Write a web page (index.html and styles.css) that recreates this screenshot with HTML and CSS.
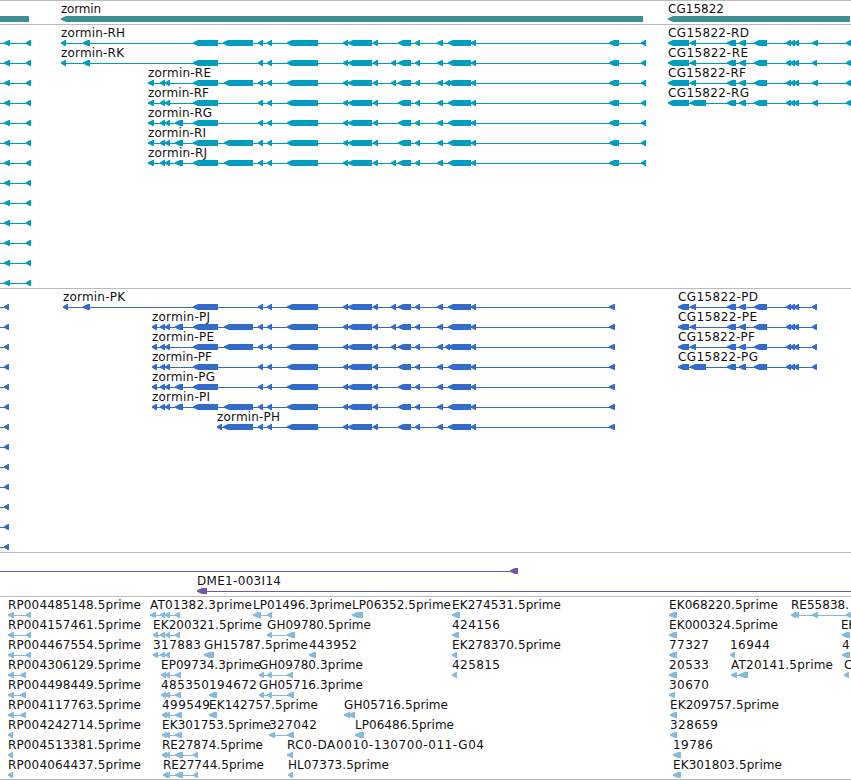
FILE: index.html
```html
<!DOCTYPE html>
<html>

<head>
    <meta charset="utf-8">
    <title>zormin - Genome Browser</title>
    <link rel="stylesheet" href="styles.css">
</head>

<body>
    <div class="browser">
        <div class="track genes" id="genes"></div>
        <div class="track transcripts" id="transcripts"></div>
        <div class="track proteins" id="proteins"></div>
        <div class="track clones" id="clones"></div>
        <div class="track ests" id="ests"></div>
    </div>
    <script src="tracks.js"></script>
</body>

</html>
```

FILE: styles.css
```css
body {
    margin: 0;
    background-color: #fff;
    overflow: hidden;
}

.browser {
    display: flex;
    flex-direction: column;
    width: 851px;
    height: 780px;
    overflow: hidden;
}

.track {
    box-sizing: border-box;
    border-top: 1px solid #bbb;
    padding-bottom: 3px;
    flex-shrink: 0;
}

.row {
    display: block;
    width: 851px;
    height: 20px;
    overflow: visible;
}

.intron {
    shape-rendering: crispEdges;
}

.label {
    font-family: "DejaVu Sans", sans-serif;
    font-size: 12px;
    fill: #111;
}

.genes {
    fill: #3d8e95;
}

.transcripts {
    fill: #009dbf;
}

.proteins {
    fill: #316bcb;
}

.clones {
    fill: #7357a5;
}

.ests {
    fill: #85badc;
    border-bottom: 1px solid #bbb;
    padding-bottom: 2px;
}
```

FILE: tracks.js
```js
const SVG = "http://www.w3.org/2000/svg";

// exons shared by all zormin isoforms
const middle = [[258, 263], [267, 272], [287, 318], [343, 348], [348, 372], [373, 378]];
const middle2 = [[398, 411], [415, 420], [437, 443]];
const tail = [[448, 471], [471, 476]];
const extra = [[391, 396]];
const start = [[160, 165], [165, 170]];
const start2 = [[175, 183]];
const big = [[193, 218]];
const big2 = [[224, 253]];
const endR = [[609, 619], [641, 646]];
const endP = [[609, 615]];

// exons shared by all CG15822 isoforms
const cg = [[727, 736], [739, 746], [754, 767], [786, 791], [790, 795], [794, 799]];

const leftR = ["", 0, 0, [[-20, -10], [4, 10], [26, 31]]];
const leftP = ["", 0, 0, [[-20, -10], [4, 9]]];

// feature = [label, x, label width, exons]
const genes = [
    [["", 0, 0, [[-40, 29]]], ["zormin", 61, 40, [[61, 643]]], ["CG15822", 668, 56, [[668, 850]]]]
];

const transcripts = [
    [leftR,
        ["zormin-RH", 61, 64, [[61, 66], [83, 90], ...big, [223, 253], ...middle, ...middle2, ...tail, ...endR]],
        ["CG15822-RD", 668, 81, [[668, 689], [690, 696], ...cg, [812, 818], [846, 851]]]],
    [leftR,
        ["zormin-RK", 61, 63, [[61, 66], [83, 90], ...big, ...middle, ...extra, ...middle2, ...tail, ...endR]],
        ["CG15822-RE", 668, 80, [[668, 689], [690, 696], ...cg, [812, 817], [846, 851]]]],
    [leftR,
        ["zormin-RE", 148, 63, [[148, 154], ...start, ...big, ...big2, ...middle, ...extra, ...middle2, [445, 450], ...tail, ...endR]],
        ["CG15822-RF", 668, 78, [[668, 689], [690, 696], ...cg, [812, 818], [846, 851]]]],
    [leftR,
        ["zormin-RF", 148, 61, [[148, 154], ...start, ...big, ...middle, ...middle2, ...tail, ...endR]],
        ["CG15822-RG", 668, 81, [[668, 689], [690, 706], ...cg, [812, 818], [846, 851]]]],
    [leftR, ["zormin-RG", 148, 64, [[148, 154], ...start, ...start2, ...big, ...middle, ...middle2, ...tail, ...endR]]],
    [leftR, ["zormin-RI", 148, 58, [[148, 154], ...start, ...start2, ...big, ...big2, ...middle, ...middle2, ...tail, ...endR]]],
    [leftR, ["zormin-RJ", 148, 59, [[148, 154], ...start, ...start2, ...big, ...big2, ...middle, ...extra, ...middle2, ...tail, ...endR]]],
    [leftR], [leftR], [leftR], [leftR], [leftR], [leftR]
];

const proteins = [
    [leftP,
        ["zormin-PK", 63, 62, [[63, 68], [83, 90], ...big, ...middle, ...extra, ...middle2, ...tail, ...endP]],
        ["CG15822-PD", 678, 80, [[678, 689], [690, 696], ...cg, [812, 817]]]],
    [leftP,
        ["zormin-PJ", 152, 58, [[152, 157], ...start, ...start2, ...big, ...big2, ...middle, ...extra, ...middle2, ...tail, ...endP]],
        ["CG15822-PE", 678, 79, [[678, 689], [690, 696], ...cg, [812, 817]]]],
    [leftP,
        ["zormin-PE", 152, 62, [[152, 157], ...start, ...big, ...big2, ...middle, ...extra, ...middle2, [445, 450], ...tail, ...endP]],
        ["CG15822-PF", 678, 77, [[678, 689], [690, 696], ...cg, [812, 817]]]],
    [leftP,
        ["zormin-PF", 152, 60, [[152, 157], ...start, ...big, ...middle, ...middle2, ...tail, ...endP]],
        ["CG15822-PG", 678, 80, [[678, 689], [690, 706], ...cg, [812, 817]]]],
    [leftP, ["zormin-PG", 152, 63, [[152, 157], ...start, ...start2, ...big, ...middle, ...middle2, ...tail, ...endP]]],
    [leftP, ["zormin-PI", 152, 58, [[152, 157], ...start, ...start2, ...big, ...big2, ...middle, ...middle2, ...tail, ...endP]]],
    [leftP, ["zormin-PH", 217, 63, [[217, 222], [223, 253], ...middle, ...middle2, ...tail, ...endP]]],
    [leftP], [leftP], [leftP], [leftP], [leftP], [leftP]
];

const clones = [
    [["", 0, 0, [[-20, -10], [510, 518]]]],
    [["DME1-003I14", 197, 84, [[197, 207], [900, 910]]]]
];

const ests = [
    [["RP004485148.5prime", 8, 133, [[8, 14], [26, 31]]],
        ["AT01382.3prime", 150, 102, [[150, 156], ...start, [175, 180]]],
        ["LP01496.3prime", 253, 99, [[253, 261], [267, 272]]],
        ["LP06352.5prime", 352, 99, [[352, 363]]],
        ["EK274531.5prime", 452, 109, [[452, 460]]],
        ["EK068220.5prime", 669, 109, [[669, 677]]],
        ["RE55838.", 791, 58, [[791, 796], [794, 799], [812, 818], [846, 851]]]],
    [["RP004157461.5prime", 8, 133, [[8, 14], [26, 31]]],
        ["EK200321.5prime", 153, 109, [[153, 158], ...start, [175, 180]]],
        ["GH09780.5prime", 267, 104, [[267, 272], [287, 295]]],
        ["424156", 452, 48, [[452, 459]]],
        ["EK000324.5prime", 669, 109, [[669, 677]]],
        ["EK", 841, 15, [[842, 850]]]],
    [["RP004467554.5prime", 8, 133, [[8, 14], [26, 31]]],
        ["317883", 153, 48, [[153, 158], ...start]],
        ["GH15787.5prime", 204, 104, [[204, 214]]],
        ["443952", 309, 48, [[309, 316]]],
        ["EK278370.5prime", 452, 109, [[452, 457]]],
        ["77327", 669, 40, [[669, 677]]],
        ["16944", 730, 40, [[730, 735]]],
        ["4", 842, 8, [[842, 850]]]],
    [["RP004306129.5prime", 8, 133, [[8, 14], [20, 26]]],
        ["EP09734.3prime", 161, 100, [[161, 166], [165, 170], [175, 181]]],
        ["GH09780.3prime", 259, 104, [[259, 264], [267, 272], [287, 293]]],
        ["425815", 452, 48, [[452, 457]]],
        ["20533", 669, 40, [[669, 677]]],
        ["AT20141.5prime", 731, 102, [[731, 737], [739, 748]]],
        ["C", 844, 8, [[844, 849]]]],
    [["RP004498449.5prime", 8, 133, [[8, 14], [20, 26]]],
        ["485350", 161, 48, [[161, 166], [165, 170], [175, 181]]],
        ["194672", 209, 48, [[209, 217]]],
        ["GH05716.3prime", 259, 104, [[259, 264], [267, 272], [287, 294]]],
        ["30670", 669, 40, [[669, 675]]]],
    [["RP004117763.5prime", 8, 133, [[8, 14], [20, 26]]],
        ["499549", 162, 48, [[162, 167], [165, 170], [175, 182]]],
        ["EK142757.5prime", 209, 109, [[209, 217]]],
        ["GH05716.5prime", 344, 104, [[344, 350], [348, 355]]],
        ["EK209757.5prime", 670, 109, [[670, 677]]]],
    [["RP004242714.5prime", 8, 133, [[8, 13]]],
        ["EK301753.5prime", 162, 109, [[162, 167], [165, 170], [175, 182]]],
        ["327042", 269, 48, [[269, 275], [287, 294]]],
        ["LP06486.5prime", 355, 99, [[355, 364]]],
        ["328659", 670, 48, [[670, 677]]]],
    [["RP004513381.5prime", 8, 133, [[8, 13]]],
        ["RE27874.5prime", 162, 101, [[162, 167], [165, 170], [175, 183], [193, 198]]],
        ["RC0-DA0010-130700-011-G04", 287, 197, [[287, 293]]],
        ["19786", 673, 40, [[673, 681]]]],
    [["RP004064437.5prime", 8, 133, [[8, 13]]],
        ["RE27744.5prime", 163, 101, [[163, 168], [166, 170], [175, 183], [193, 198]]],
        ["HL07373.5prime", 288, 101, [[288, 293]]],
        ["EK301803.5prime", 673, 109, [[673, 681]]]]
];

function add(parent, name, attrs) {
    const el = document.createElementNS(SVG, name);
    for (const key in attrs) {
        el.setAttribute(key, attrs[key]);
    }
    parent.appendChild(el);
    return el;
}

// Arrow pointing left, blunt 5px head and 6px high
function drawExon(svg, x1, x2) {
    const neck = Math.min(x1 + 5, x2 - 1);
    add(svg, "polygon", {
        points: `${x1},17.2 ${neck},15 ${x2},15 ${x2},21 ${neck},21 ${x1},18.8`
    });
}

function drawTrack(id, rows) {
    const track = document.getElementById(id);
    rows.forEach((features) => {
        const svg = add(track, "svg", { class: "row" });
        features.forEach(([label, x, width, exons]) => {
            if (exons.length > 1) {
                const from = exons[0][0];
                const to = exons[exons.length - 1][1];
                add(svg, "rect", { class: "intron", x: from + 1, y: 18, width: to - from - 1, height: 1 });
            }
            exons.forEach(([x1, x2]) => drawExon(svg, x1, x2));
            if (label) {
                add(svg, "text", { class: "label", x: x, y: 12, textLength: width }).textContent = label;
            }
        });
    });
}

drawTrack("genes", genes);
drawTrack("transcripts", transcripts);
drawTrack("proteins", proteins);
drawTrack("clones", clones);
drawTrack("ests", ests);
```
